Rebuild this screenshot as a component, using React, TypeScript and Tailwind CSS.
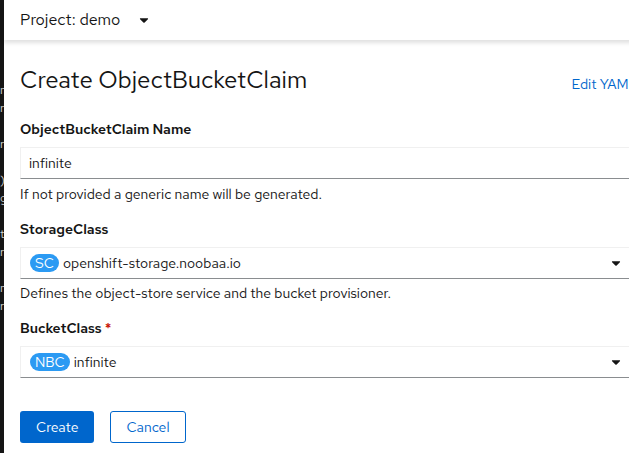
import React from "react";

const font = { fontFamily: '"Red Hat Text", Inter, "Noto Sans", sans-serif' };

const Caret: React.FC<{ className?: string }> = ({ className }) => (
  <svg className={className} viewBox="0 0 320 512" width="10" height="14" fill="currentColor">
    <path d="M31.3 192h257.3c17.8 0 26.7 21.5 14.1 34.1L174.1 354.8c-7.8 7.8-20.5 7.8-28.3 0L17.2 226.1C4.6 213.5 13.5 192 31.3 192z" />
  </svg>
);

const Badge: React.FC<{ label: string }> = ({ label }) => (
  <span className="inline-flex h-[18px] items-center rounded-full bg-[#2b9af3] px-[5px] text-[14px] leading-none text-white">
    {label}
  </span>
);

const App: React.FC = () => {
  return (
    <div className="flex h-[453px] w-[629px] overflow-hidden bg-white text-[#151515]" style={font}>
      {/* left edge of the page behind */}
      <div className="flex w-[4px] shrink-0 flex-col overflow-hidden bg-[#151515] pt-[82px] text-[12px] leading-[16px] text-[#d2d2d2]">
        <div className="flex flex-col items-end gap-[2px]">
          {["m", "r", "", "r", "", ")", "g", "", "t", "r", "", "m", "r"].map((c, i) => (
            <span key={i} className="h-[16px] w-[4px] overflow-hidden text-right">{c}</span>
          ))}
        </div>
      </div>

      <div className="flex w-[660px] shrink-0 flex-col">
        {/* Project bar */}
        <div className="relative z-10 flex h-[40px] items-center gap-[19px] pl-[16px] shadow-[0_3px_4px_rgba(3,3,3,0.12)]">
          <span className="text-[16px]">Project: demo</span>
          <Caret className="text-[#151515]" />
        </div>

        <div className="flex flex-col px-[16px]">
          {/* Heading */}
          <div className="mt-[24px] flex items-baseline justify-between">
            <h1 className="text-[24px] leading-[32px]">Create ObjectBucketClaim</h1>
            <a className="relative top-[1px] pr-[11px] text-[14px] text-[#0066cc]">Edit YAML</a>
          </div>

          {/* Name */}
          <label className="mt-[23px] text-[14px] font-semibold leading-[20px]">ObjectBucketClaim Name</label>
          <div className="mt-[8px] flex h-[32px] items-center border border-[#f0f0f0] border-b-[#8a8d90] px-[8px] text-[14px]">
            infinite
          </div>
          <p className="mt-[5px] text-[14px] leading-[20px]">If not provided a generic name will be generated.</p>

          {/* StorageClass */}
          <label className="mt-[15px] text-[14px] font-semibold leading-[20px]">StorageClass</label>
          <div className="mt-[8px] flex h-[32px] items-center justify-between border border-[#f0f0f0] border-b-[#8a8d90] pl-[9px] pr-[26px] text-[14px]">
            <span className="flex items-center gap-[4px]">
              <Badge label="SC" />
              openshift-storage.noobaa.io
            </span>
            <Caret />
          </div>
          <p className="mt-[4px] text-[14px] leading-[20px]">Defines the object-store service and the bucket provisioner.</p>

          {/* BucketClass */}
          <label className="mt-[15px] text-[14px] font-semibold leading-[20px]">
            BucketClass <span className="text-[#c9190b]">*</span>
          </label>
          <div className="mt-[8px] flex h-[32px] items-center justify-between border border-[#f0f0f0] border-b-[#8a8d90] pl-[9px] pr-[26px] text-[14px]">
            <span className="flex items-center gap-[4px]">
              <Badge label="NBC" />
              infinite
            </span>
            <Caret />
          </div>

          {/* Actions */}
          <div className="mt-[33px] flex gap-[16px]">
            <button className="h-[32px] rounded-[3px] bg-[#0066cc] px-[16px] text-[14px] text-white">Create</button>
            <button className="h-[32px] rounded-[3px] border border-[#0066cc] px-[15px] text-[14px] text-[#0066cc]">Cancel</button>
          </div>
        </div>
      </div>
    </div>
  );
};

export default App;
